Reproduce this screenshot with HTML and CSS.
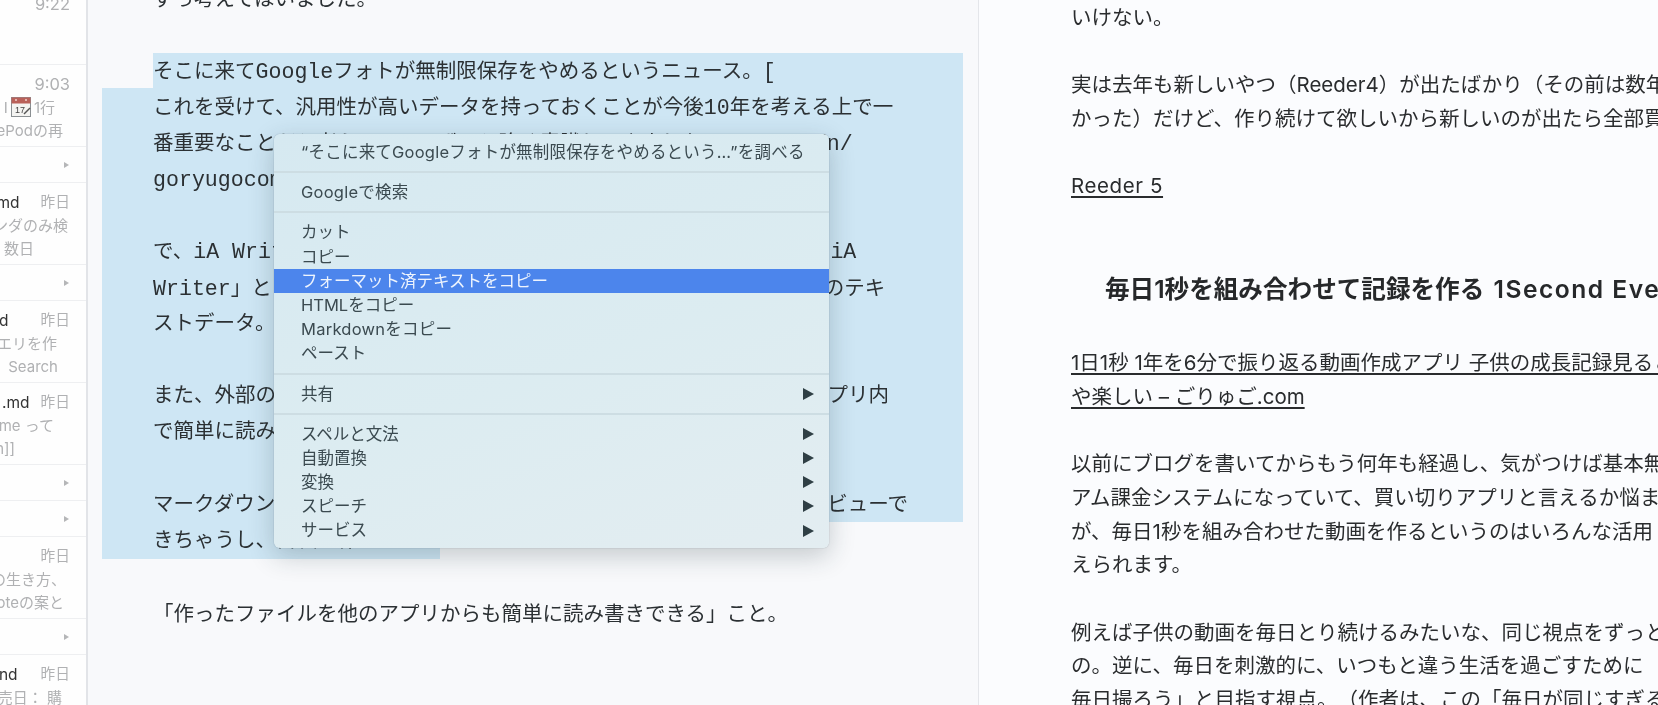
FILE: index.html
```html
<!DOCTYPE html>
<html lang="ja">
<head>
<meta charset="utf-8">
<title>iA Writer</title>
<link rel="stylesheet" href="styles.css">
</head>
<body>
<div class="app">
  <aside class="sidebar">
    <div class="row first"><div class="line top"><span class="time">9:22</span></div></div>
    <div class="row">
      <div class="line top"><span class="time">9:03</span></div>
      <div class="line r31 icon-line">I<svg class="cal" viewBox="0 0 20 20" aria-hidden="true"><rect x="0.5" y="0.5" width="19" height="19" fill="#f4f4f2" stroke="#8a8f92"/><rect x="0.5" y="0.5" width="19" height="6" fill="#b9615a"/><circle cx="5" cy="3" r="1" fill="#f0d0cc"/><circle cx="15" cy="3" r="1" fill="#f0d0cc"/><text x="9" y="16" class="cal-num">17</text><path d="M13 17l6-6" stroke="#555" stroke-width="1.4"/></svg><span class="gap">1行</span></div>
      <div class="line r23">HomePodの再</div>
    </div>
    <div class="row fold"><i class="tri"></i></div>
    <div class="row">
      <div class="line top"><span class="title g21">.md</span><span class="date">昨日</span></div>
      <div class="line r18">カレンダのみ検</div>
      <div class="line r52">に 数日</div>
    </div>
    <div class="row fold"><i class="tri"></i></div>
    <div class="row">
      <div class="line top"><span class="title g32">d</span><span class="date">昨日</span></div>
      <div class="line r29">クエリを作</div>
      <div class="line r28">Search</div>
    </div>
    <div class="row">
      <div class="line top"><span class="title g11">.md</span><span class="date">昨日</span></div>
      <div class="line r32">me って</div>
      <div class="line r71">n]]</div>
    </div>
    <div class="row fold"><i class="tri"></i></div>
    <div class="row fold"><i class="tri"></i></div>
    <div class="row">
      <div class="line top"><span class="date">昨日</span></div>
      <div class="line r20">の生き方、</div>
      <div class="line r22">Keynoteの案と</div>
    </div>
    <div class="row fold"><i class="tri"></i></div>
    <div class="row">
      <div class="line top"><span class="title g23">nd</span><span class="date">昨日</span></div>
      <div class="line r24">売日： 購</div>
    </div>
  </aside>

  <main class="editor">
    <div class="doc">
      <p class="tx">ずっ考えてはいました。</p>
      <p class="tx">&nbsp;</p>
      <p class="tx sel sel-first">そこに来て<span class="m">Google</span>フォトが無制限保存をやめるというニュース。<span class="m">[</span></p>
      <p class="tx sel">これを受けて、汎用性が高いデータを持っておくことが今後<span class="m">10</span>年を考える上で一</p>
      <p class="tx sel">番重要なことだと考えていて、ずっと強く意識してきました。<span class="m">https://n/</span></p>
      <p class="tx sel"><span class="m">goryugocom/entry</span></p>
      <p class="tx sel">&nbsp;</p>
      <p class="tx sel">で、<span class="m">iA Writer </span>は全ファイルをテキストで持てる点がとても良いです。<span class="m">iA</span></p>
      <p class="tx sel"><span class="m">Writer</span>」というフォルダに入っているのは、どれもごくごく普通の形式のテキ</p>
      <p class="tx sel">ストデータ。</p>
      <p class="tx sel">&nbsp;</p>
      <p class="tx sel">また、外部のエディタでも同じファイルを開けるし、他の端末のスマホアプリ内</p>
      <p class="tx sel">で簡単に読み書きできる。</p>
      <p class="tx sel">&nbsp;</p>
      <p class="tx sel">マークダウンで書いておけば、見出しや太字の確認などが実に簡単なプレビューで</p>
      <p class="tx sel sel-last">きちゃうし、目次も作れるし。</p>
      <p class="tx">&nbsp;</p>
      <p class="tx tail">「作ったファイルを他のアプリからも簡単に読み書きできる」こと。</p>
    </div>
  </main>

  <section class="preview">
    <div class="article">
      <p class="pl">いけない。</p>
      <p class="pl">&nbsp;</p>
      <p class="pl">実は去年も新しいやつ（Reeder4）が出たばかり（その前は数年出なかった）</p>
      <p class="pl">かった）だけど、作り続けて欲しいから新しいのが出たら全部買う。</p>
      <p class="pl">&nbsp;</p>
      <p class="pl"><a class="lnk wide">Reeder 5</a></p>
      <h2 class="head">毎日1秒を組み合わせて記録を作る <span class="head-latin">1Second Everyday</span></h2>
      <p class="pl"><a class="lnk">1日1秒 1年を6分で振り返る動画作成アプリ 子供の成長記録見ると</a></p>
      <p class="pl"><a class="lnk">や楽しい – ごりゅご.com</a></p>
      <p class="pl">&nbsp;</p>
      <p class="pl">以前にブログを書いてからもう何年も経過し、気がつけば基本無料</p>
      <p class="pl">アム課金システムになっていて、買い切りアプリと言えるか悩ま</p>
      <p class="pl">が、毎日1秒を組み合わせた動画を作るというのはいろんな活用</p>
      <p class="pl">えられます。</p>
      <p class="pl">&nbsp;</p>
      <p class="pl">例えば子供の動画を毎日とり続けるみたいな、同じ視点をずっと</p>
      <p class="pl">の。逆に、毎日を刺激的に、いつもと違う生活を過ごすために</p>
      <p class="pl">毎日撮ろう」と目指す視点。（作者は、この「毎日が同じすぎる</p>
    </div>
  </section>

  <nav class="menu">
    <div class="mi lookup">“そこに来てGoogleフォトが無制限保存をやめるという…”を調べる</div>
    <div class="sep"></div>
    <div class="mi latin">Googleで検索</div>
    <div class="sep"></div>
    <div class="mi">カット</div>
    <div class="mi">コピー</div>
    <div class="mi active">フォーマット済テキストをコピー</div>
    <div class="mi">HTMLをコピー</div>
    <div class="mi latin">Markdownをコピー</div>
    <div class="mi">ペースト</div>
    <div class="sep"></div>
    <div class="mi sub">共有<i class="arrow"></i></div>
    <div class="sep"></div>
    <div class="mi sub">スペルと文法<i class="arrow"></i></div>
    <div class="mi sub">自動置換<i class="arrow"></i></div>
    <div class="mi sub">変換<i class="arrow"></i></div>
    <div class="mi sub">スピーチ<i class="arrow"></i></div>
    <div class="mi sub">サービス<i class="arrow"></i></div>
  </nav>
</div>
</body>
</html>
```

FILE: styles.css
```css
html, body { margin: 0; padding: 0; height: 705px; overflow: hidden; background: #fbfcfe; }
p, h2 { margin: 0; }

.app {
  position: relative;
  display: flex;
  width: 1658px;
  height: 705px;
  overflow: hidden;
  filter: blur(0.4px);
  font-family: "Inter", "Noto Sans CJK JP", sans-serif;
  text-spacing-trim: space-all;
}

/* sidebar */
.sidebar {
  flex: 0 0 86px;
  height: 705px;
  overflow: hidden;
  background: #fefefe;
  border-right: 2px solid #e2e4e8;
  font-size: 15px;
  color: #b0b1b3;
}
.row {
  height: 72.5px;
  padding-top: 8.5px;
  border-bottom: 1px solid #eeeff1;
}
.row.first { height: 71px; padding-top: 0; margin-top: -7px; }
.row.fold { height: 35px; padding-top: 0; display: flex; align-items: center; justify-content: flex-end; padding-right: 17px; }
.tri { width: 0; height: 0; border-left: 5px solid #b5b6b8; border-top: 3.5px solid transparent; border-bottom: 3.5px solid transparent; }
.line { display: flex; justify-content: flex-end; align-items: center; white-space: nowrap; height: 23px; line-height: 23px; }
.line.top { padding-right: 16px; height: 22px; }
.time { font-size: 16.5px; color: #b0b1b3; }
.date { font-size: 14.7px; color: #b0b1b3; }
.title { color: #333; font-size: 15.5px; }
.g11 { margin-right: 11px; }
.g21 { margin-right: 21px; }
.g23 { margin-right: 23px; }
.g32 { margin-right: 32px; }
.cal { width: 20px; height: 20px; flex: none; margin-left: 3px; }
.cal-num { font-size: 9px; font-family: "Liberation Sans", sans-serif; fill: #444; text-anchor: middle; }
.gap { margin-left: 3px; }
.r18 { padding-right: 18px; }
.r20 { padding-right: 20px; }
.r22 { padding-right: 22px; }
.r23 { padding-right: 23px; }
.r24 { padding-right: 24px; }
.r28 { padding-right: 28px; }
.r29 { padding-right: 29px; }
.r31 { padding-right: 31px; }
.r32 { padding-right: 32px; }
.r52 { padding-right: 52px; }
.r71 { padding-right: 71px; }

/* editor */
.editor {
  flex: 0 0 890px;
  height: 705px;
  overflow: hidden;
  background: #f8f9fb;
  border-right: 1px solid #e4e6ea;
}
.doc { margin-top: -19px; margin-left: 14px; width: 861px; }
.tx {
  box-sizing: border-box;
  height: 36.2px;
  padding-top: 3.5px;
  line-height: 32.7px;
  padding-left: 51px;
  font-family: "Liberation Mono", "Noto Sans CJK JP", monospace;
  font-size: 20.5px;
  color: #2b3033;
  white-space: nowrap;
  overflow: hidden;
}
.m { font-size: 21.6px; }
.sel { background: #cee6f4; }
.sel-first { margin-left: 51px; padding-left: 0; padding-top: 2.5px; height: 34.7px; line-height: 32.2px; }
.sel-last { width: 338px; }
.tail { padding-top: 5px; height: 38px; }

/* preview */
.preview { flex: 1; min-width: 0; height: 705px; overflow: hidden; background: #fbfcfe; }
.article { padding: 1px 0 0 92px; width: 700px; }
.pl { height: 33.7px; line-height: 33.7px; font-size: 20.5px; color: #2a2c2e; white-space: nowrap; }
.lnk { color: #2a2c2e; text-decoration: underline; text-underline-offset: 3px; }
.wide { letter-spacing: .6px; }
.head {
  height: 143px;
  padding: 69px 0 0 34px;
  box-sizing: border-box;
  line-height: 34px;
  font-size: 24.6px;
  font-weight: 600;
  color: #26282a;
  white-space: nowrap;
}
.head-latin { margin-left: 3px; letter-spacing: 1.5px; }

/* context menu */
.menu {
  position: absolute;
  left: 274px;
  top: 134px;
  width: 555px;
  height: 414px;
  box-sizing: border-box;
  padding: 6px 0;
  border-radius: 6px;
  background: linear-gradient(160deg, #d6e9f1 0%, #dcecf1 55%, #e3edf1 100%);
  box-shadow: 0 0 1px rgba(50, 70, 80, .55), 0 8px 26px rgba(30, 50, 60, .24);
  font-size: 16.5px;
  color: #3b4a50;
}
.mi {
  height: 24.2px;
  line-height: 24.2px;
  padding: 0 15px 0 27px;
  white-space: nowrap;
  display: flex;
  justify-content: space-between;
  align-items: center;
}
.lookup { letter-spacing: .22px; }
.latin { letter-spacing: .25px; }
.mi.active { background: #4c85ec; color: #eef4fd; }
.sep { height: 2px; margin: 7px 0; background: #cddde3; }
.arrow { width: 0; height: 0; border-left: 11px solid #2f3f45; border-top: 6px solid transparent; border-bottom: 6px solid transparent; }
```
